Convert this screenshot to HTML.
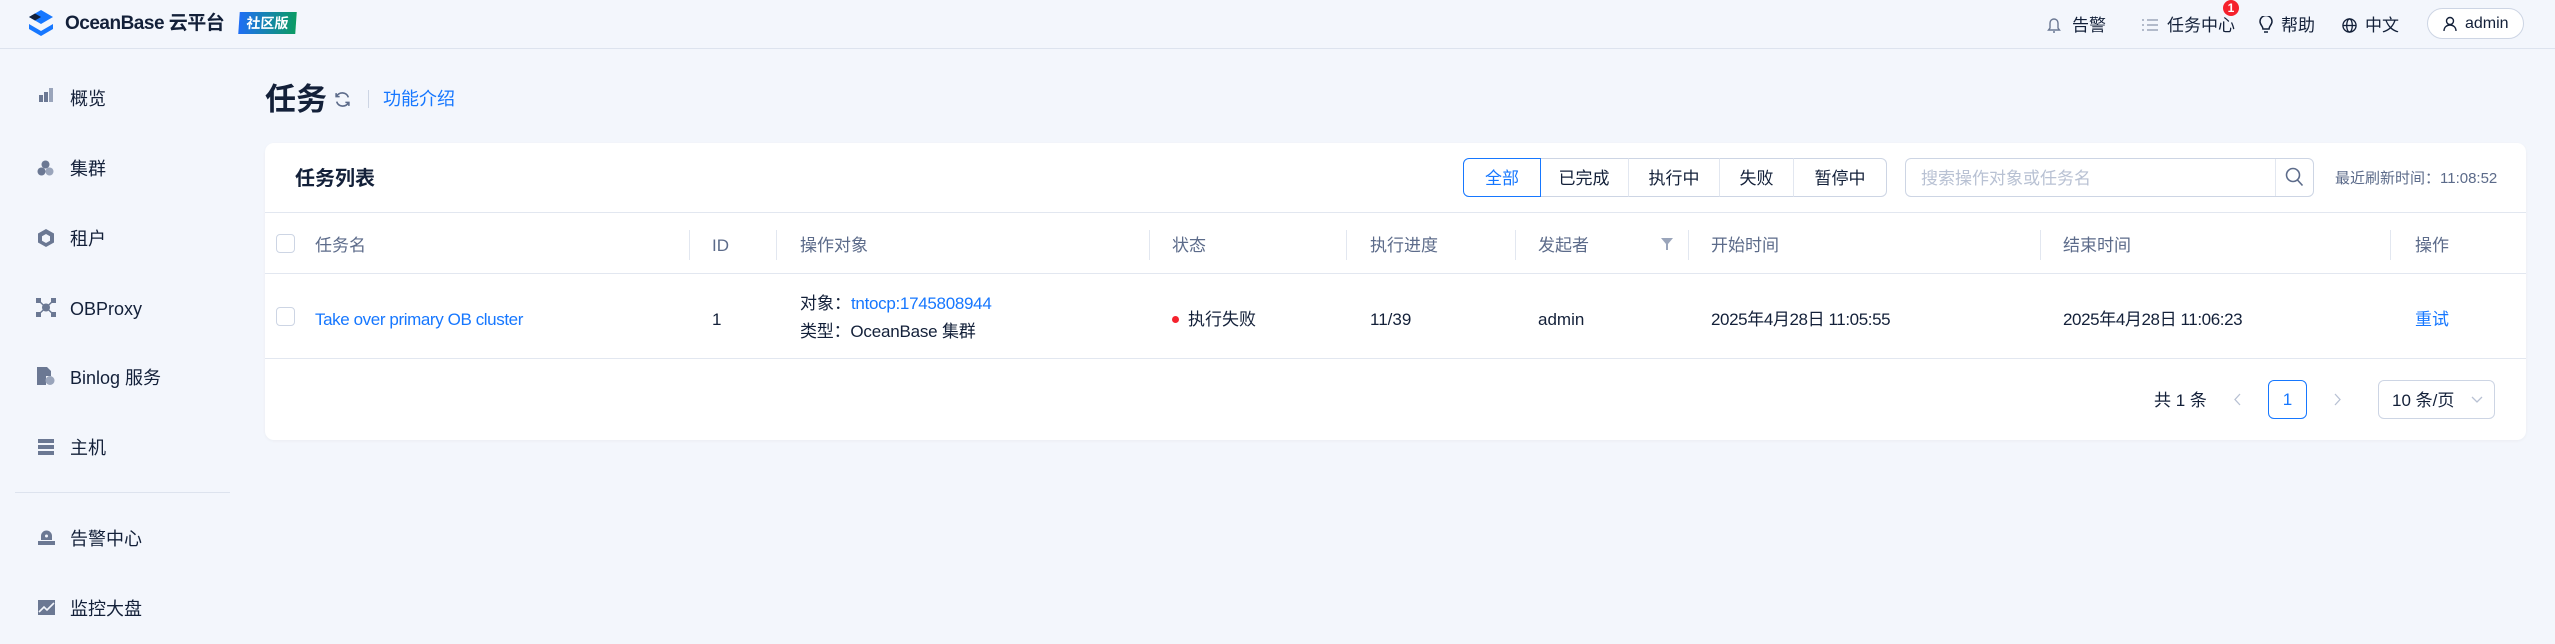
<!DOCTYPE html>
<html><head><meta charset="utf-8"><style>
*{margin:0;padding:0;box-sizing:border-box}
body{width:2555px;height:644px;background:#f3f6fc;font-family:"Liberation Sans","Noto Sans CJK SC",sans-serif;color:#132039;position:relative;overflow:hidden}
.a{position:absolute;white-space:nowrap;line-height:1.2}
.top{position:absolute;left:0;top:0;width:2555px;height:49px;border-bottom:1px solid #dde3ee;background:#f3f6fc}
.nav{font-size:17px;color:#132039;top:16px}
.side{font-size:18px;color:#132039;margin-top:2px}
.ic{position:absolute;background:#6b7893}
.card{position:absolute;left:265px;top:143px;width:2261px;height:297px;background:#fff;border-radius:9px;box-shadow:0 1px 3px rgba(0,0,0,.04)}
.th{font-size:17px;color:#5c6b8a;top:236px}
.td{font-size:17px;color:#132039;margin-top:2px}
.sep{position:absolute;top:230px;width:1px;height:30px;background:#e2e7f0}
.cb{position:absolute;width:19px;height:19px;border:1px solid #cdd5e4;border-radius:4px;background:#fff}
.blue{color:#1677ff}
.btn{position:absolute;top:158px;height:39px;border:1px solid #cdd5e4;font-size:17px;text-align:center;line-height:39px;background:#fff}
</style></head><body>
<div class="top"></div>
<svg class="a" style="left:26px;top:9px" width="30" height="28" viewBox="0 0 30 28"><path d="M15 1 L27 8 L15 15 L3 8Z" fill="#1677ff"/><path d="M3 8 L9 4.5 L15 8 L9 11.5Z" fill="#132039"/><path d="M3 15 L15 22 L27 15 L27 20 L15 27 L3 20Z" fill="#1677ff"/></svg>
<div class="a" style="left:65px;top:13px;font-size:19px;font-weight:bold;letter-spacing:-0.5px;color:#132039">OceanBase 云平台</div>
<div class="a" style="left:239px;top:12px;width:57px;height:22px;background:linear-gradient(90deg,#1f6ef5,#0b9b63);color:#fff;font-size:14px;font-weight:bold;line-height:22px;text-align:center;transform:skewX(-4deg)">社区版</div>
<svg class="a" style="left:2047px;top:16px" width="14" height="18" viewBox="0 0 14 18"><path d="M3 12V7a4 4 0 0 1 8 0v5l1.5 2h-11Z M6 16h2" fill="none" stroke="#6b7893" stroke-width="1.4"/></svg>
<div class="a nav" style="left:2072px">告警</div>
<svg class="a" style="left:2142px;top:18px" width="16" height="14"><g stroke="#8b96ad" stroke-width="1.3"><path d="M0 2h2M5 2h11M0 7h2M5 7h11M0 12h2M5 12h11"/></g></svg>
<div class="a nav" style="left:2167px">任务中心</div>
<div class="a" style="left:2223px;top:0;width:16px;height:16px;border-radius:8px;background:#f5222d;color:#fff;font-size:12px;font-weight:bold;text-align:center;line-height:16px">1</div>
<svg class="a" style="left:2259px;top:16px" width="14" height="20" viewBox="0 0 14 20"><path d="M4 13c0-3-3-4-3-7.5a6 6 0 0 1 12 0C13 9 10 10 10 13Z M5 16h4" fill="none" stroke="#132039" stroke-width="1.5"/></svg>
<div class="a nav" style="left:2281px">帮助</div>
<svg class="a" style="left:2342px;top:18px" width="15" height="15" viewBox="0 0 16 16"><g fill="none" stroke="#132039" stroke-width="1.4"><circle cx="8" cy="8" r="7"/><ellipse cx="8" cy="8" rx="3" ry="7"/><path d="M1 8h14"/></g></svg>
<div class="a nav" style="left:2365px">中文</div>
<div class="a" style="left:2427px;top:8px;width:97px;height:31px;border:1px solid #cdd5e4;border-radius:16px;background:#fff"></div>
<svg class="a" style="left:2443px;top:16px" width="14" height="16" viewBox="0 0 14 16"><g fill="none" stroke="#132039" stroke-width="1.4"><circle cx="7" cy="5" r="3.5"/><path d="M1 15c0-4 3-6 6-6s6 2 6 6"/></g></svg>
<div class="a" style="left:2465px;top:14px;font-size:16px">admin</div>

<!-- sidebar -->
<div class="ic" style="left:39px;top:95px;width:4px;height:7px"></div><div class="ic" style="left:44px;top:92px;width:4px;height:10px"></div><div class="ic" style="left:49px;top:88px;width:4px;height:14px;background:#9aa5bb"></div>
<div class="a side" style="left:70px;top:87px">概览</div>
<svg class="a" style="left:37px;top:160px" width="17" height="16"><circle cx="8.5" cy="4.5" r="4" fill="#6b7893"/><circle cx="4.5" cy="11.5" r="4" fill="#6b7893"/><circle cx="12.5" cy="11.5" r="4" fill="#9aa5bb"/></svg>
<div class="a side" style="left:70px;top:157px">集群</div>
<svg class="a" style="left:37px;top:228px" width="18" height="19" viewBox="0 0 18 19"><path d="M9 1l8 4.5v9L9 19 1 14.5v-9Z" fill="#6b7893"/><path d="M9 6l4 2.3v4.4L9 15 5 12.7V8.3Z" fill="#f3f6fc"/></svg>
<div class="a side" style="left:70px;top:227px">租户</div>
<svg class="a" style="left:36px;top:298px" width="20" height="19"><g fill="#6b7893"><rect x="0" y="0" width="5" height="5"/><rect x="15" y="0" width="5" height="5"/><rect x="0" y="14" width="5" height="5"/><rect x="15" y="14" width="5" height="5"/><circle cx="10" cy="9.5" r="4"/></g><path d="M3 3l14 13M17 3L3 16" stroke="#6b7893" stroke-width="1.5"/></svg>
<div class="a side" style="left:70px;top:297px">OBProxy</div>
<svg class="a" style="left:37px;top:367px" width="18" height="19"><path d="M0 0h10l4 4v5H0Z M0 9h9v9H0Z" fill="#6b7893"/><circle cx="13" cy="13.5" r="4.5" fill="#9aa5bb"/></svg>
<div class="a side" style="left:70px;top:366px">Binlog 服务</div>
<div class="ic" style="left:38px;top:439px;width:16px;height:4px"></div><div class="ic" style="left:38px;top:445px;width:16px;height:4px"></div><div class="ic" style="left:38px;top:451px;width:16px;height:4px"></div>
<div class="a side" style="left:70px;top:436px">主机</div>
<div class="a" style="left:15px;top:492px;width:215px;height:1px;background:#dde3ee"></div>
<svg class="a" style="left:38px;top:530px" width="17" height="15"><path d="M3 10V6a5.5 5.5 0 0 1 11 0v4Z" fill="#6b7893"/><rect x="0" y="11" width="17" height="4" fill="#6b7893"/><circle cx="8.5" cy="6" r="1.5" fill="#f3f6fc"/></svg>
<div class="a side" style="left:70px;top:527px">告警中心</div>
<svg class="a" style="left:38px;top:600px" width="17" height="15"><rect width="17" height="15" fill="#6b7893"/><path d="M1 12l5-5 3 3 7-7" stroke="#f3f6fc" stroke-width="1.6" fill="none"/></svg>
<div class="a side" style="left:70px;top:597px">监控大盘</div>

<!-- title -->
<div class="a" style="left:265px;top:81px;font-size:31px;font-weight:bold">任务</div>
<svg class="a" style="left:334px;top:91px" width="17" height="17" viewBox="0 0 16 16"><g fill="none" stroke="#5c6b8a" stroke-width="1.5"><path d="M13.5 6A6 6 0 0 0 2.5 5"/><path d="M2.5 10A6 6 0 0 0 13.5 11"/><path d="M2 2v3.3h3.3M14 14v-3.3h-3.3"/></g></svg>
<div class="a" style="left:368px;top:90px;width:1px;height:18px;background:#cdd5e4"></div>
<div class="a blue" style="left:383px;top:89px;font-size:18px">功能介绍</div>

<div class="card"></div>
<div class="a" style="left:295px;top:167px;font-size:20px;font-weight:bold">任务列表</div>
<div class="btn" style="left:1463px;width:78px;border:1px solid #1677ff;color:#1677ff;border-radius:6px 0 0 6px;z-index:2">全部</div>
<div class="btn" style="left:1540px;width:89px;border-left:none">已完成</div>
<div class="btn" style="left:1628px;width:92px;border-left:1px solid #e2e7f0">执行中</div>
<div class="btn" style="left:1719px;width:75px;border-left:1px solid #e2e7f0">失败</div>
<div class="btn" style="left:1793px;width:94px;border-left:1px solid #e2e7f0;border-radius:0 6px 6px 0">暂停中</div>
<div class="btn" style="left:1905px;width:409px;border-radius:6px"></div>
<div class="a" style="left:1921px;top:169px;font-size:17px;color:#b8c1d3">搜索操作对象或任务名</div>
<div class="a" style="left:2275px;top:159px;width:1px;height:37px;background:#e2e7f0"></div>
<svg class="a" style="left:2285px;top:167px" width="19" height="20" viewBox="0 0 19 20"><g fill="none" stroke="#5c6b8a" stroke-width="1.6"><circle cx="8" cy="8" r="6.5"/><path d="M12.5 13l5 5.5"/></g></svg>
<div class="a" style="left:2335px;top:170px;font-size:15px;color:#5c6b8a">最近刷新时间：11:08:52</div>

<div class="a" style="left:265px;top:212px;width:2261px;height:1px;background:#e2e7f0"></div>
<div class="a" style="left:265px;top:273px;width:2261px;height:1px;background:#e2e7f0"></div>
<div class="a" style="left:265px;top:358px;width:2261px;height:1px;background:#e2e7f0"></div>

<div class="cb" style="left:276px;top:234px"></div>
<div class="a th" style="left:315px">任务名</div>
<div class="sep" style="left:689px"></div>
<div class="a th" style="left:712px">ID</div>
<div class="sep" style="left:776px"></div>
<div class="a th" style="left:800px">操作对象</div>
<div class="sep" style="left:1149px"></div>
<div class="a th" style="left:1172px">状态</div>
<div class="sep" style="left:1346px"></div>
<div class="a th" style="left:1370px">执行进度</div>
<div class="sep" style="left:1515px"></div>
<div class="a th" style="left:1538px">发起者</div>
<svg class="a" style="left:1661px;top:238px" width="12" height="12"><path d="M0 0h12L7 6v6H5V6Z" fill="#9aa5bb"/></svg>
<div class="sep" style="left:1688px"></div>
<div class="a th" style="left:1711px">开始时间</div>
<div class="sep" style="left:2040px"></div>
<div class="a th" style="left:2063px">结束时间</div>
<div class="sep" style="left:2390px"></div>
<div class="a th" style="left:2415px">操作</div>

<div class="cb" style="left:276px;top:307px"></div>
<div class="a td blue" style="left:315px;top:308px;letter-spacing:-0.4px">Take over primary OB cluster</div>
<div class="a td" style="left:712px;top:308px">1</div>
<div class="a td" style="left:800px;top:292px">对象：<span class="blue" style="letter-spacing:-0.3px">tntocp:1745808944</span></div>
<div class="a td" style="left:800px;top:320px;letter-spacing:-0.2px">类型：OceanBase 集群</div>
<div class="a" style="left:1172px;top:316px;width:7px;height:7px;border-radius:4px;background:#f5222d"></div>
<div class="a td" style="left:1188px;top:308px">执行失败</div>
<div class="a td" style="left:1370px;top:308px">11/39</div>
<div class="a td" style="left:1538px;top:308px">admin</div>
<div class="a td" style="left:1711px;top:308px;letter-spacing:-0.4px">2025年4月28日 11:05:55</div>
<div class="a td" style="left:2063px;top:308px;letter-spacing:-0.4px">2025年4月28日 11:06:23</div>
<div class="a td blue" style="left:2415px;top:308px">重试</div>

<div class="a td" style="left:2154px;top:389px">共 1 条</div>
<svg class="a" style="left:2233px;top:393px" width="8" height="13"><path d="M7 1L2 6.5 7 12" fill="none" stroke="#b8c1d3" stroke-width="1.3"/></svg>
<div class="a" style="left:2268px;top:380px;width:39px;height:39px;border:1px solid #1677ff;border-radius:6px;color:#1677ff;font-size:17px;text-align:center;line-height:37px">1</div>
<svg class="a" style="left:2334px;top:393px" width="8" height="13"><path d="M1 1l5 5.5L1 12" fill="none" stroke="#b8c1d3" stroke-width="1.3"/></svg>
<div class="a" style="left:2378px;top:380px;width:117px;height:39px;border:1px solid #cdd5e4;border-radius:6px"></div>
<div class="a td" style="left:2392px;top:389px">10 条/页</div>
<svg class="a" style="left:2471px;top:396px" width="12" height="8"><path d="M1 1l5 5 5-5" fill="none" stroke="#b8c1d3" stroke-width="1.3"/></svg>
</body></html>
